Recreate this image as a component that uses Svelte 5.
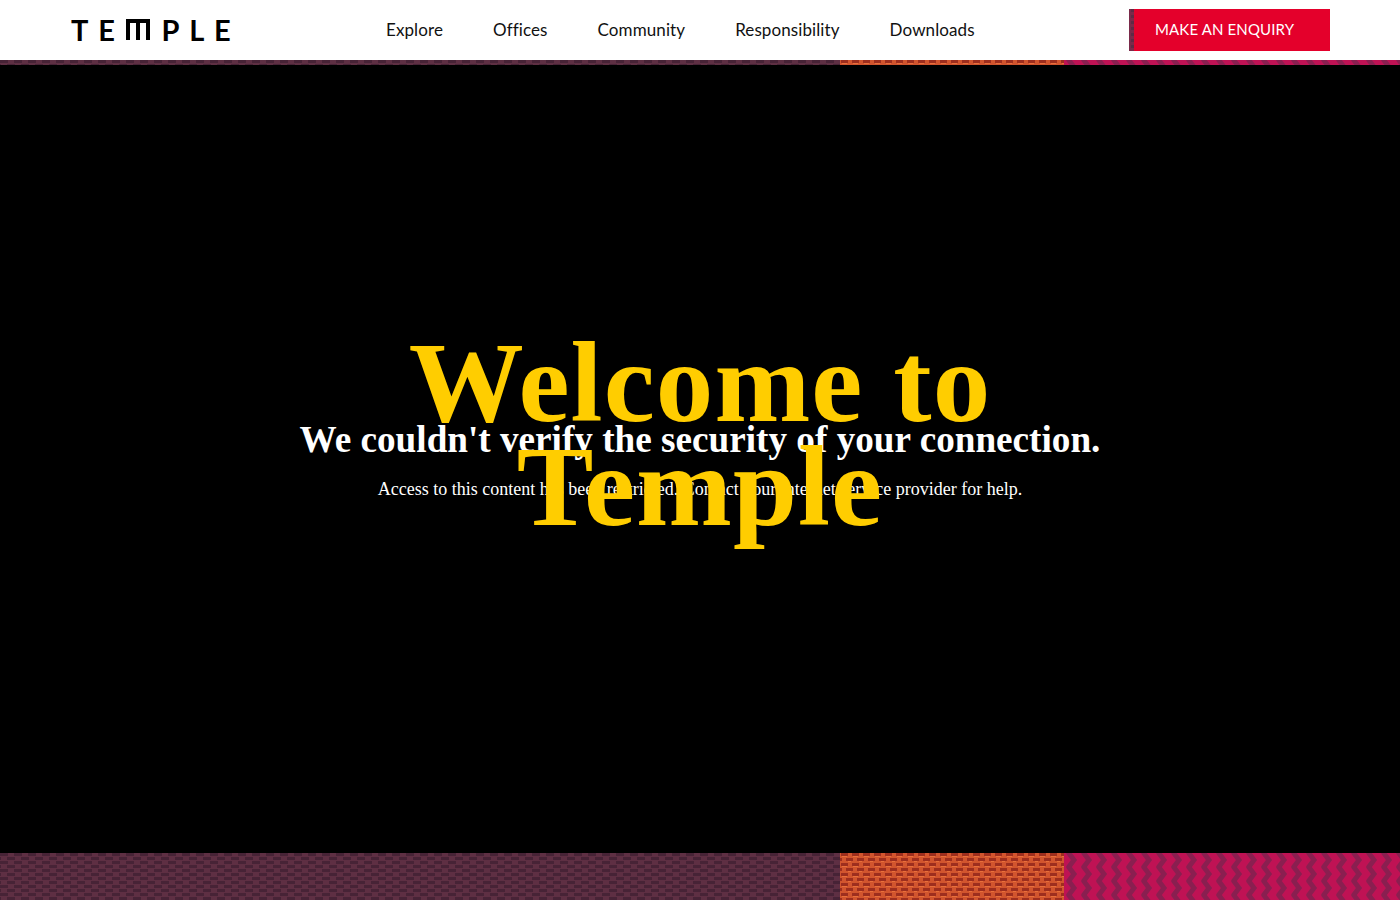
<script>
  const links = ['Explore', 'Offices', 'Community', 'Responsibility', 'Downloads'];
</script>

<div class="page">
  <header class="top">
    <div class="bar">
      <a class="logo" href="#top">T<span>E</span><span class="m">M</span><span>P</span><span>L</span><span>E</span></a>
      <nav class="nav">
        {#each links as link}
          <a href="#top">{link}</a>
        {/each}
      </nav>
      <a class="cta" href="#top"><span class="cta-edge"></span>MAKE AN ENQUIRY</a>
    </div>
    <div class="strip thin">
      <div class="plum"></div>
      <div class="rust"></div>
      <div class="pink"></div>
    </div>
  </header>

  <main class="hero">
    <div class="notice">
      <h2>We couldn't verify the security of your connection.</h2>
      <p>Access to this content has been restricted. Contact your internet service provider for help.</p>
    </div>
    <h1>Welcome to<br />Temple</h1>
  </main>

  <footer class="strip tall">
    <div class="plum"></div>
    <div class="rust"></div>
    <div class="pink"></div>
  </footer>
</div>

<style>
  :global(body) {
    margin: 0;
    background: #000;
  }
  .page {
    height: 900px;
    display: flex;
    flex-direction: column;
    overflow: hidden;
  }
  .bar {
    height: 60px;
    background: #fff;
    display: flex;
    align-items: center;
    padding: 0 70px 0 71px;
    box-sizing: border-box;
    font-family: Lato, "Noto Sans", sans-serif;
  }
  a {
    text-decoration: none;
    color: inherit;
  }
  .logo {
    width: 315px;
    display: flex;
    gap: 9.8px;
    color: #000;
    font: 700 29px/1 Lato, sans-serif;
    margin-top: -2px;
  }
  .logo .m {
    box-sizing: border-box;
    width: 24px;
    height: 21px;
    margin: 4px 2px 0 1px;
    border: 4px solid #000;
    border-bottom: 0;
    color: transparent;
    font-size: 14px;
    line-height: 14px;
    overflow: hidden;
    background: linear-gradient(#000, #000) center / 4px 100% no-repeat;
  }
  .nav {
    display: flex;
    gap: 50px;
    color: #111;
    font-size: 17px;
    margin-top: -1px;
    font-variant-ligatures: none;
    letter-spacing: 0.1px;
  }
  .cta {
    margin-left: auto;
    width: 201px;
    height: 42px;
    box-sizing: border-box;
    padding: 0 0 2px 26px;
    display: flex;
    align-items: center;
    position: relative;
    background: #e4002b;
    color: #fff;
    font-size: 15px;
    letter-spacing: 0.13px;
  }
  .cta-edge {
    position: absolute;
    left: 0;
    top: 0;
    bottom: 0;
    width: 5px;
    background-color: #7a2a4a;
    background-image: conic-gradient(#5e2a45 25%, transparent 0);
    background-size: 5px 6px;
  }
  .strip {
    display: grid;
    grid-template-columns: 840px 224px 336px;
  }
  .thin {
    height: 5px;
  }
  .tall {
    height: 47px;
  }
  .plum {
    background-image: url("data:image/svg+xml,%3Csvg xmlns='http://www.w3.org/2000/svg' width='14' height='8'%3E%3Crect width='14' height='8' fill='%235e2f43'/%3E%3Crect x='0' y='0' width='8' height='3' fill='%23472336'/%3E%3Crect x='7' y='4' width='7' height='3' fill='%23472336'/%3E%3Crect x='0' y='4' width='1' height='3' fill='%23472336'/%3E%3C/svg%3E");
  }
  .rust {
    background-image: url("data:image/svg+xml,%3Csvg xmlns='http://www.w3.org/2000/svg' width='11' height='10'%3E%3Crect width='11' height='10' fill='%23d2552e'/%3E%3Crect x='1' y='0' width='7' height='3' fill='%239e2e1e'/%3E%3Crect x='6' y='5' width='5' height='3' fill='%239e2e1e'/%3E%3Crect x='0' y='5' width='2' height='3' fill='%239e2e1e'/%3E%3Crect x='2' y='3' width='5' height='1' fill='%23e8703c'/%3E%3Crect x='8' y='8' width='3' height='1' fill='%23e8703c'/%3E%3C/svg%3E");
  }
  .pink {
    background-image: url("data:image/svg+xml,%3Csvg xmlns='http://www.w3.org/2000/svg' width='15' height='14'%3E%3Crect width='15' height='14' fill='%23bf1254'/%3E%3Cpath d='M4 -1L10 7L4 15' fill='none' stroke='%238a1f50' stroke-width='5'/%3E%3C/svg%3E");
  }
  .hero {
    flex: 1;
    display: grid;
    place-items: center;
    background: #000;
    text-align: center;
    font-family: "Liberation Serif", serif;
  }
  .notice,
  h1 {
    grid-area: 1 / 1;
  }
  .notice {
    color: #fff;
  }
  h2 {
    margin: 0;
    font-size: 37.2px;
    line-height: 42px;
  }
  p {
    margin: 18px 0 0;
    font-size: 18px;
    line-height: 21px;
  }
  h1 {
    margin: 0 0 48px;
    color: #ffcd00;
    font-size: 115px;
    line-height: 104px;
    font-weight: 700;
    letter-spacing: 1.1px;
    position: relative;
  }
</style>
